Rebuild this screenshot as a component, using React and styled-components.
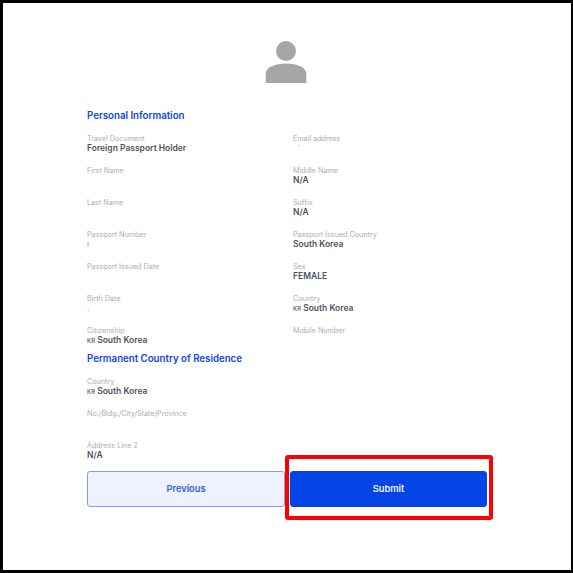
import React from "react";
import styled, { createGlobalStyle } from "styled-components";

const Global = createGlobalStyle`
  html, body { margin: 0; padding: 0; background: #fff; }
  body { font-family: "Inter", "Liberation Sans", sans-serif; }
`;

const Frame = styled.div`
  box-sizing: border-box;
  position: relative;
  width: 573px;
  height: 573px;
  border: solid #000;
  border-width: 3px 2px 3px 3px;
  background: #fff;
  padding: 37px 84px 0;
`;

const Avatar = styled.div`
  display: flex;
  justify-content: center;
  height: 44px;
  margin-bottom: 24px;
  padding-right: 2px;
`;

const SectionTitle = styled.h2`
  margin: ${(p) => p.$top || 0}px 0 0;
  height: 14px;
  font-size: 9.7px;
  line-height: 16px;
  font-weight: 600;
  color: #0f46e0;
  white-space: nowrap;
`;

const Grid = styled.div`
  display: grid;
  grid-template-columns: 206px 1fr;
  grid-auto-rows: 32px;
  margin-top: 12px;
`;

const Stack = styled.div`
  display: grid;
  grid-template-rows: 32px 32px auto;
  margin-top: 12px;
`;

const Field = styled.div`
  display: flex;
  flex-direction: column;
`;

const Label = styled.div`
  height: 9px;
  font-size: 7.2px;
  line-height: 9px;
  color: #adadad;
  white-space: nowrap;
`;

const Value = styled.div`
  height: 10px;
  font-size: 8.5px;
  line-height: 10px;
  font-weight: 600;
  color: #4c5364;
  white-space: nowrap;
`;

const Mark = styled.div`
  height: 10px;
  margin-left: ${(p) => p.$indent || 0}px;
  font-size: 8px;
  line-height: 10px;
  color: #8a8f9a;
`;

const Code = styled.span`
  font-size: 6px;
  font-weight: 600;
  color: #6a7080;
  margin-right: 2px;
`;

const Buttons = styled.div`
  display: flex;
  gap: 5px;
  margin-top: 11px;
  width: 400px;
`;

const Button = styled.button`
  flex: 0 0 ${(p) => (p.$primary ? 197 : 198)}px;
  height: 36px;
  padding: 0 0 2px;
  border-radius: 3px;
  font-family: inherit;
  font-size: 9.3px;
  font-weight: 600;
  border: 1px solid ${(p) => (p.$primary ? "#0a45e4" : "#7d9ef0")};
  background: ${(p) => (p.$primary ? "#0443e6" : "#edf2fe")};
  color: ${(p) => (p.$primary ? "#f2f5ff" : "#2f60e6")};
`;

const Highlight = styled.div`
  position: absolute;
  box-sizing: border-box;
  left: 282px;
  top: 452px;
  width: 208px;
  height: 65px;
  border: 4px solid #f00;
  border-radius: 3px;
  pointer-events: none;
`;

const F = ({ label, value, code, mark, indent }) => (
  <Field>
    <Label>{label}</Label>
    {value && (
      <Value>
        {code && <Code>{code}</Code>}
        {value}
      </Value>
    )}
    {mark && <Mark $indent={indent}>{mark}</Mark>}
  </Field>
);

export default function App() {
  return (
    <>
      <Global />
      <Frame>
        <Avatar>
          <svg width="42" height="44" viewBox="0 0 42 44">
            <circle cx="21" cy="11" r="10" fill="#a6a6a6" />
            <path d="M0.7 43 V34 C0.7 27 10 23.5 21 23.5 C32 23.5 41.3 27 41.3 34 V43 Z" fill="#a6a6a6" />
          </svg>
        </Avatar>
        <SectionTitle>Personal Information</SectionTitle>
        <Grid>
          <F label="Travel Document" value="Foreign Passport Holder" />
          <F label="Email address" mark="˙" indent={5} />
          <F label="First Name" />
          <F label="Middle Name" value="N/A" />
          <F label="Last Name" />
          <F label="Suffix" value="N/A" />
          <F label="Passport Number" mark="ı" />
          <F label="Passport Issued Country" value="South Korea" />
          <F label="Passport Issued Date" />
          <F label="Sex" value="FEMALE" />
          <F label="Birth Date" mark="." />
          <F label="Country" value="South Korea" code="KR" />
          <F label="Citizenship" value="South Korea" code="KR" />
          <F label="Mobile Number" />
        </Grid>
        <SectionTitle $top={-7}>Permanent Country of Residence</SectionTitle>
        <Stack>
          <F label="Country" value="South Korea" code="KR" />
          <F label="No./Bldg./City/State/Province" />
          <F label="Address Line 2" value="N/A" />
        </Stack>
        <Buttons>
          <Button>Previous</Button>
          <Button $primary>Submit</Button>
        </Buttons>
        <Highlight />
      </Frame>
    </>
  );
}
